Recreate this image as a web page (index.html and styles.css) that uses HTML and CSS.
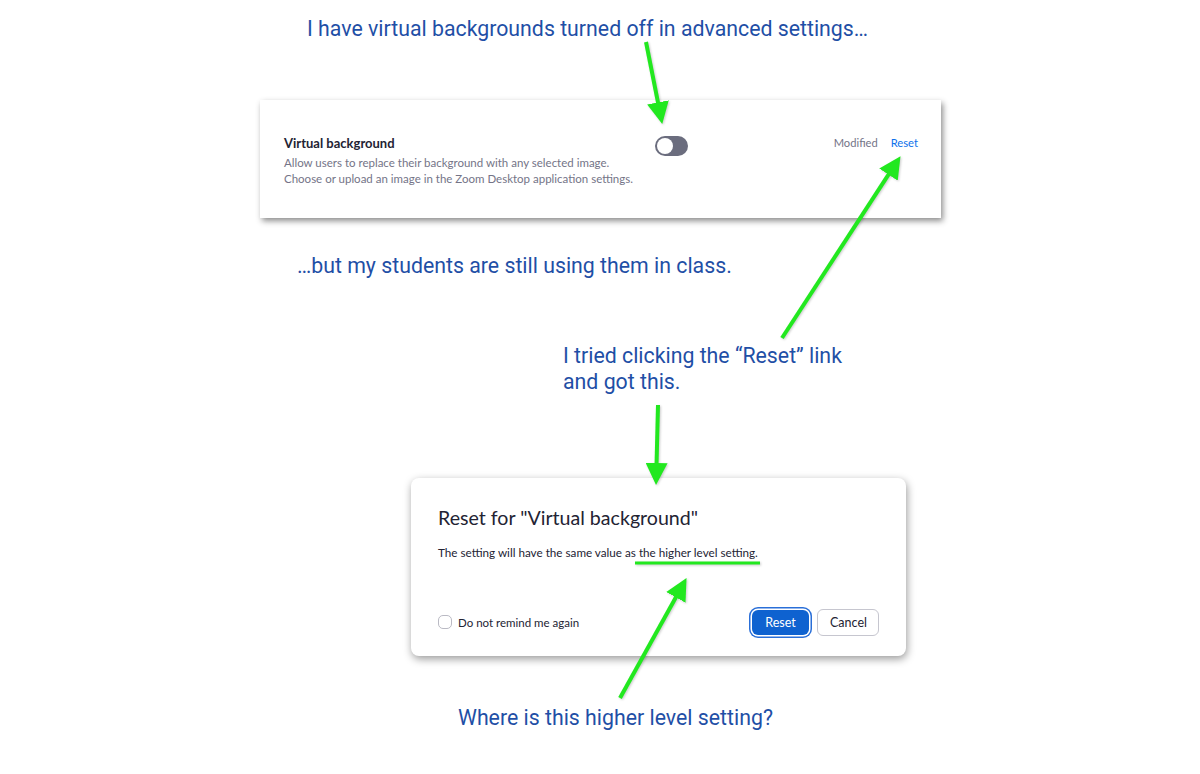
FILE: index.html
```html
<!DOCTYPE html>
<html lang="en">
<head>
    <meta charset="UTF-8">
    <title>Virtual background reset</title>
    <link rel="stylesheet" href="styles.css">
</head>
<body>
    <div class="canvas">
        <p class="note note-top">I have virtual backgrounds turned off in advanced settings…</p>

        <div class="setting-card">
            <div class="setting-info">
                <div class="setting-title">Virtual background</div>
                <div class="setting-desc">Allow users to replace their background with any selected image.<br>Choose or upload an image in the Zoom Desktop application settings.</div>
            </div>
            <div class="toggle"><span class="toggle-knob"></span></div>
            <div class="setting-status">
                <span class="modified">Modified</span>
                <a class="reset-link">Reset</a>
            </div>
        </div>

        <p class="note note-students">…but my students are still using them in class.</p>

        <p class="note note-clicked">I tried clicking the “Reset” link<br>and got this.</p>

        <div class="dialog">
            <h2 class="dialog-title">Reset for "Virtual background"</h2>
            <p class="dialog-body">The setting will have the same value as the higher level setting.</p>
            <div class="dialog-footer">
                <label class="remind">
                    <span class="checkbox"></span>
                    Do not remind me again
                </label>
                <div class="dialog-buttons">
                    <button class="btn btn-primary">Reset</button>
                    <button class="btn btn-default">Cancel</button>
                </div>
            </div>
        </div>

        <p class="note note-where">Where is this higher level setting?</p>

        <!-- green arrows drawn over the screenshots -->
        <svg class="arrows" width="1200" height="774" viewBox="0 0 1200 774">
            <defs>
                <marker id="head" markerUnits="userSpaceOnUse" markerWidth="22" markerHeight="22" viewBox="0 0 20 20" refX="10" refY="10" orient="auto">
                    <path d="M0 0 L20 10 L0 20 Z" fill="#22e81f"/>
                </marker>
            </defs>
            <g stroke="#22e81f" stroke-width="4" marker-end="url(#head)">
                <line x1="646" y1="42" x2="660.1" y2="113.2"/>
                <line x1="782" y1="338" x2="894.5" y2="165.4"/>
                <line x1="658" y1="405" x2="656.3" y2="474"/>
                <line x1="620" y1="698" x2="681.2" y2="587.7"/>
            </g>
            <line x1="635" y1="563" x2="760" y2="563" stroke="#22e81f" stroke-width="3"/>
        </svg>
    </div>
</body>
</html>
```

FILE: styles.css
```css
body {
    margin: 0;
    background: #fff;
    font-family: Lato, "Open Sans", sans-serif;
    color: #232333;
}
.canvas {
    position: relative;
    width: 1200px;
    height: 774px;
    overflow: hidden;
}
.note {
    margin: 0;
    font-family: Roboto, "Noto Sans", sans-serif;
    font-size: 21.3px;
    line-height: 26px;
    color: #1f4fa6;
}
.note-top {
    padding-top: 16px;
    margin-left: 307px;
}
.note-students {
    margin-top: 35px;
    margin-left: 297px;
}
.note-clicked {
    margin-top: 64px;
    margin-left: 563px;
}
.note-where {
    margin-top: 49px;
    margin-left: 458px;
}

/* settings row */
.setting-card {
    display: flex;
    align-items: flex-start;
    box-sizing: border-box;
    width: 681px;
    height: 118px;
    margin: 58px 0 0 260px;
    padding: 34px 23px 0 24px;
    background: #fff;
    box-shadow: 2px 3px 6px rgba(0, 0, 0, 0.45);
}
.setting-info {
    flex: none;
    width: 371px;
}
.setting-title {
    font-size: 13px;
    font-weight: bold;
    line-height: 18px;
    color: #232333;
}
.setting-desc {
    margin-top: 3px;
    font-size: 11.5px;
    line-height: 16px;
    color: #747487;
}
.toggle {
    position: relative;
    flex: none;
    width: 33px;
    height: 20px;
    margin-top: 2px;
    border-radius: 10px;
    background: #6b6d7e;
}
.toggle-knob {
    position: absolute;
    left: 2px;
    top: 2px;
    width: 16px;
    height: 16px;
    border-radius: 50%;
    background: #fff;
}
.setting-status {
    margin-left: auto;
    display: flex;
    gap: 13px;
    font-size: 11.2px;
    line-height: 18px;
}
.modified {
    color: #747487;
}
.reset-link {
    color: #0e71eb;
    cursor: pointer;
}

/* reset dialog */
.dialog {
    box-sizing: border-box;
    width: 495px;
    height: 178px;
    margin: 83px 0 0 411px;
    padding: 27px 27px 0 27px;
    background: #fff;
    border-radius: 8px;
    box-shadow: 1px 3px 8px rgba(0, 0, 0, 0.4);
}
.dialog-title {
    margin: 0;
    font-size: 19.6px;
    font-weight: normal;
    line-height: 26px;
    color: #232333;
}
.dialog-body {
    margin: 13px 0 0;
    font-size: 11.7px;
    line-height: 16px;
    color: #232333;
}
.dialog-footer {
    display: flex;
    align-items: center;
    justify-content: space-between;
    margin-top: 48px;
    height: 28px;
}
.remind {
    display: flex;
    align-items: center;
    gap: 6px;
    font-size: 11.5px;
    color: #232333;
}
.checkbox {
    box-sizing: border-box;
    width: 14px;
    height: 14px;
    border: 1px solid #babac4;
    border-radius: 5px;
}
.dialog-buttons {
    display: flex;
    align-items: center;
    gap: 8px;
}
.btn {
    box-sizing: border-box;
    height: 25px;
    padding: 0 12px;
    font-family: Lato, "Open Sans", sans-serif;
    font-size: 12.5px;
    border-radius: 6px;
    cursor: pointer;
}
.btn-primary {
    width: 57px;
    border: none;
    color: #fff;
    background: #0e62d0;
    box-shadow: 0 0 0 1.5px #fff, 0 0 0 3px #2a6fd8;
}
.btn-default {
    width: 62px;
    height: 27px;
    border: 1px solid #c6c6cf;
    color: #232333;
    background: #fff;
}

.arrows {
    position: absolute;
    left: 0;
    top: 0;
    pointer-events: none;
    filter: drop-shadow(1px 1px 1px rgba(0, 0, 0, 0.2));
}
```
